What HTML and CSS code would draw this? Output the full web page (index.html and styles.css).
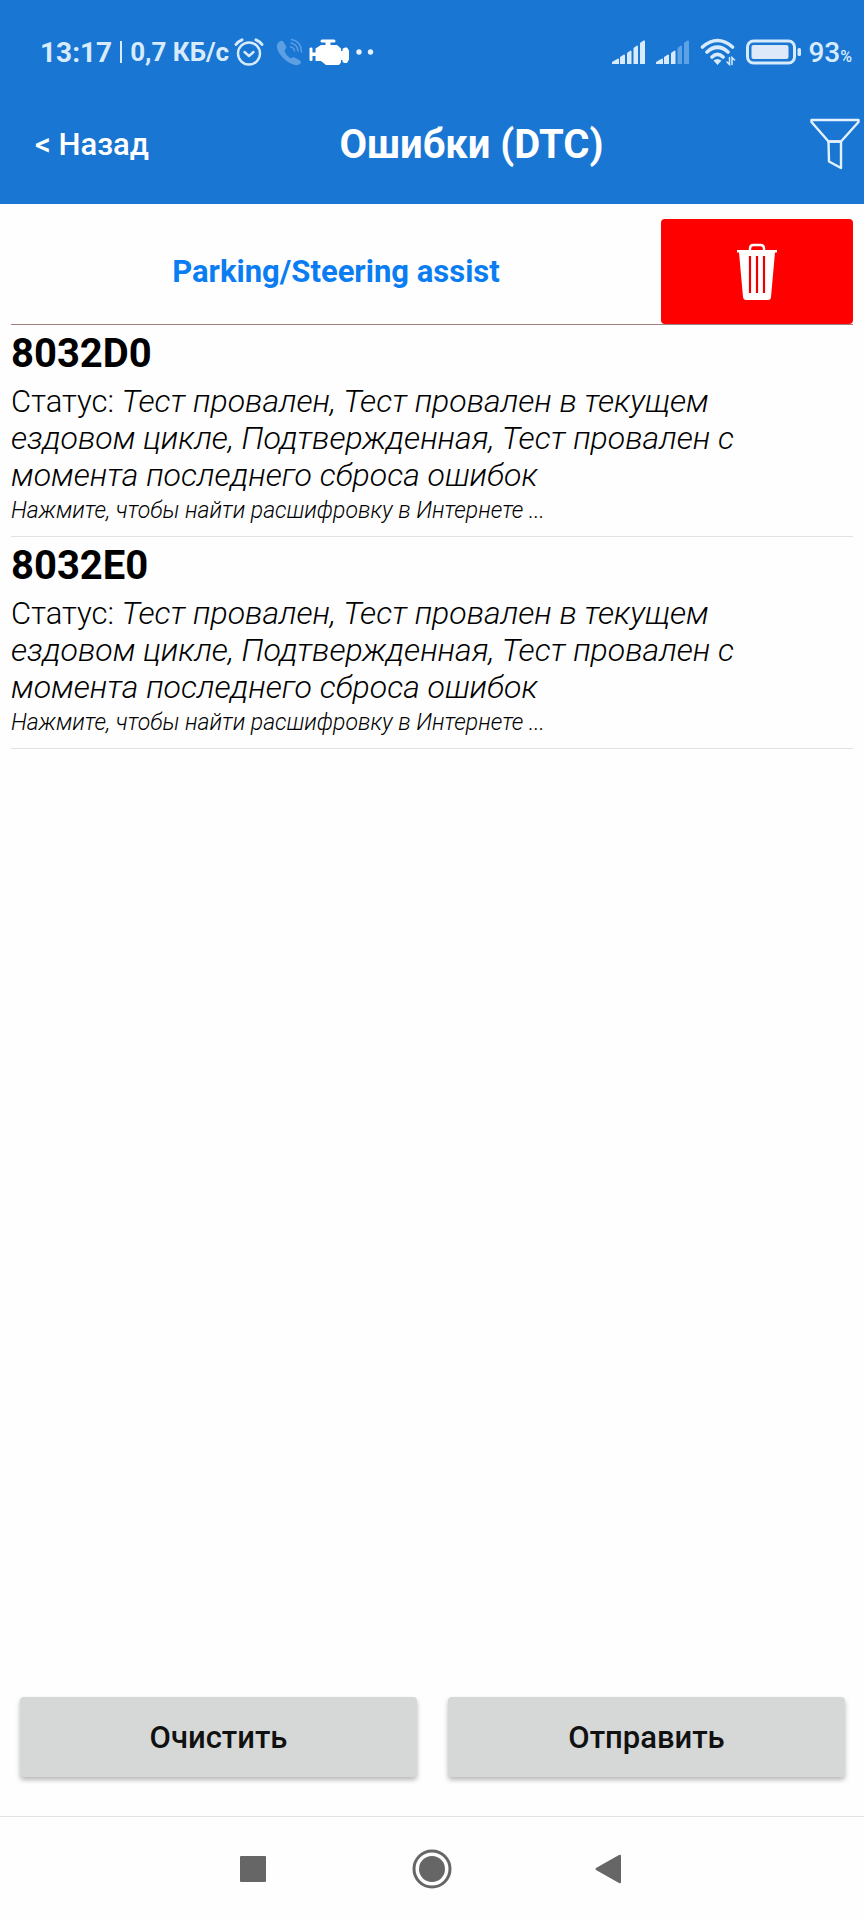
FILE: index.html
```html
<!DOCTYPE html>
<html lang="ru">

<head>
  <meta charset="utf-8">
  <meta name="viewport" content="width=device-width, initial-scale=1">
  <title>Ошибки (DTC)</title>

  <link rel="stylesheet" href="styles.css">
</head>

<body>
  <header class="header">
    <!-- Phone status bar -->
    <div class="status-bar">
      <div class="status-left">
        <span class="clock">13:17</span>
        <span class="divider"></span>
        <span class="speed">0,7 КБ/с</span>
        <svg class="icon-alarm" width="30" height="28" viewBox="0 0 30 28" fill="none" stroke="#d8ebfd" stroke-width="2.4" stroke-linecap="round" stroke-linejoin="round">
          <circle cx="15" cy="15.500" r="11" />
          <path d="M10.500 14l4.500 4 4.500-4" />
          <path d="M2 6.500Q4 3.500 8 1.800M28 6.500Q26 3.500 22 1.800" stroke-width="3" />
        </svg>
        <svg class="icon-phone" width="27" height="28" viewBox="0 0 27 28" fill="none" stroke="#5c9fe3" stroke-linecap="round">
          <path fill="#5c9fe3" stroke="none" d="M3.500 3.500Q6 2 7.500 4L10 8Q11 10 9.300 11.500L8.500 13Q10 17.500 14.500 20.200L16.800 19.500Q18 19 19.500 20L24 22.500Q26 24 24.500 25.500Q22 28 18 26.800Q10 24.500 4.500 17Q1 12 .8 8Q.8 5 3.500 3.500Z" />
          <path d="M15.500 1.500Q25 3 25.500 14M15.200 5Q21.500 6.500 22 13M14.500 9Q18 9.500 18.500 13" stroke-width="1.400" />
        </svg>
        <svg class="icon-engine" width="42" height="28" viewBox="0 0 42 28" fill="#fff">
          <path d="M14 1.500h12q1.500 0 1.500 1.500t-1.500 1.500h-3.500v2.500h6.500l4 3.500v2.500h1.500v-2q1-1.500 3-1.500h1.500l2 3v9l-2 3.500h-2.500l-2-1v-2h-1.500v2.500l-2 2.500H18l-5-4H7.500v-5H4.500v4q0 1-1.500 1T1.500 21.500v-11Q1.500 9.500 3 9.500T4.500 10.500v4h3v-4l5.500-3.500h4.500V4.500H14q-1.500 0-1.500-1.500t1.500-1.500z" />
        </svg>
        <svg class="icon-dots" width="18" height="6" viewBox="0 0 18 6" fill="#e6f2fe">
          <circle cx="3" cy="3" r="2.700" />
          <circle cx="14.500" cy="3" r="2.700" />
        </svg>
      </div>

      <div class="status-right">
        <svg width="34" height="26" viewBox="0 0 34 26" fill="#d8ebfd">
          <path d="M0 25v-2l6-3.500q1 0 1 1V25zM8 25v-7l4-2.500q1 0 1 1V25zM15 25V14l3.500-2.500q1 0 1 1V25zM21.500 25V9L25 6.500q1 0 1 1V25zM28 25V4l3.500-2.500q1.500-.5 1.500 1V25z" />
        </svg>
        <svg width="34" height="26" viewBox="0 0 34 26" fill="#d8ebfd">
          <path d="M0 25v-2l6-3.500q1 0 1 1V25zM8 25v-7l4-2.500q1 0 1 1V25zM15 25V14l3.500-2.500q1 0 1 1V25z" />
          <path fill="#5ea2e6" d="M21.500 25V9L25 6.500q1 0 1 1V25zM28 25V4l3.500-2.500q1.500-.5 1.500 1V25z" />
        </svg>
        <svg class="icon-wifi" width="36" height="28" viewBox="0 0 36 28" fill="none" stroke="#d8ebfd" stroke-width="3.600" stroke-linecap="round">
          <path d="M2.500 9Q17.500-4 32.500 9M7 14Q17.500 4.500 28 14M12 19Q17.500 13.500 23 19" />
          <path fill="#d8ebfd" stroke="none" d="M13.500 22.500Q17.500 19.500 21.500 22.500L17.500 27Z" />
          <path stroke-width="1.500" d="M29.500 19.500v7l-2.500-2.500M32 26.500v-7l2.500 2.500" />
        </svg>
        <svg class="icon-battery" width="56" height="26" viewBox="0 0 56 26">
          <rect x="1.500" y="2" width="47" height="22" rx="6" fill="none" stroke="#d8ebfd" stroke-width="3" />
          <rect x="5.500" y="6" width="37" height="14" rx="2" fill="#dde8f8" />
          <rect x="51.500" y="9" width="3.500" height="8" rx="1.500" fill="#d8ebfd" />
        </svg>
        <span class="battery-level">93<small>%</small></span>
      </div>
    </div>

    <div class="toolbar">
      <button class="back-btn" type="button">&lt; Назад</button>
      <h1>Ошибки (DTC)</h1>
      <button class="filter-btn" type="button" aria-label="Фильтр">
        <svg width="50" height="52" viewBox="0 0 50 52" fill="none" stroke="#e4f2ff" stroke-width="2.400" stroke-linejoin="round">
          <path d="M1.500 2H48.500V4L31 23.500H18.500L1.500 4Z" />
          <path d="M18.500 23.500H31V50L19 43.500Z" />
        </svg>
      </button>
    </div>
  </header>

  <main class="content">
    <div class="section-head">
      <h2>Parking/Steering assist</h2>
      <button class="delete-btn" type="button" aria-label="Удалить">
        <svg width="42" height="58" viewBox="0 0 42 58">
          <path d="M14 8V5.500Q14 2 17.500 2H24.500Q28 2 28 5.500V8" fill="none" stroke="#fff" stroke-width="2.400" />
          <path fill="#fff" d="M1 7H41V9.500H39L35 54Q34.800 57 32 57H10Q7.500 57 7 54L3 9.500H1Z" />
          <path d="M14 13V50M21 13V50M28 13V50" stroke="#e00" stroke-width="2.200" />
        </svg>
      </button>
    </div>

    <!-- Trouble codes -->
    <ul class="dtc-list">
      <li class="dtc-item">
        <h3>8032D0</h3>
        <p class="dtc-status">Статус: <em>Тест провален, Тест провален в текущем ездовом цикле, Подтвержденная, Тест провален с момента последнего сброса ошибок</em></p>
        <a class="dtc-link" href="#">Нажмите, чтобы найти расшифровку в Интернете ...</a>
      </li>
      <li class="dtc-item">
        <h3>8032E0</h3>
        <p class="dtc-status">Статус: <em>Тест провален, Тест провален в текущем ездовом цикле, Подтвержденная, Тест провален с момента последнего сброса ошибок</em></p>
        <a class="dtc-link" href="#">Нажмите, чтобы найти расшифровку в Интернете ...</a>
      </li>
    </ul>
  </main>

  <div class="actions">
    <button class="action-btn" type="button">Очистить</button>
    <button class="action-btn" type="button">Отправить</button>
  </div>

  <!-- System navigation -->
  <nav class="nav-bar">
    <button type="button" aria-label="Недавние">
      <svg width="40" height="40" viewBox="0 0 40 40" fill="#666">
        <rect x="7" y="7" width="26" height="26" rx="1" />
      </svg>
    </button>
    <button type="button" aria-label="Домой">
      <svg width="40" height="40" viewBox="0 0 40 40" fill="#666">
        <circle cx="20" cy="20" r="18" fill="none" stroke="#666" stroke-width="3" />
        <circle cx="20" cy="20" r="13" />
      </svg>
    </button>
    <button type="button" aria-label="Назад">
      <svg width="40" height="40" viewBox="0 0 40 40" fill="#666">
        <path d="M5 19L28 6Q30 5 30 7V33Q30 35 28 34L5 21Q4 20 5 19Z" />
      </svg>
    </button>
  </nav>
</body>

</html>
```
FILE: styles.css
```css
* {
  margin: 0;
  padding: 0;
  box-sizing: border-box;
}

:root {
  --primary: #1976d3;
  --link: #0a7df2;
  --danger: #ff0000;
  --status: #d8ebfd;
}

body {
  display: flex;
  flex-direction: column;
  min-height: 100vh;
  font-family: Roboto, sans-serif;
  background-color: #fefefe;
  color: #000;
}

button {
  border: none;
  background: none;
  font-family: inherit;
  cursor: pointer;
}

svg {
  display: block;
  flex-shrink: 0;
}

.header {
  background-color: var(--primary);
  color: #fff;
}

/* Status bar */
.status-bar {
  display: flex;
  justify-content: space-between;
  align-items: center;
  height: 104px;
  padding: 0 12px 0 40px;
  color: var(--status);
}

.status-left,
.status-right {
  display: flex;
  align-items: center;
}

.clock,
.speed {
  font-size: 28px;
  font-weight: 700;
  white-space: nowrap;
}

.speed {
  font-size: 26px;
}

.divider {
  width: 2px;
  height: 22px;
  margin: 0 8px;
  background-color: var(--status);
}

.icon-alarm {
  margin: 0 12px 0 5px;
}

.icon-engine {
  margin: 0 6px 0 5px;
}

.status-right {
  gap: 10px;
}

.battery-level {
  font-size: 28px;
  font-weight: 500;
}

.icon-battery {
  margin-right: -4px;
}

.battery-level small {
  font-size: 16px;
}

/* Title row */
.toolbar {
  display: flex;
  align-items: center;
  height: 80px;
  margin-bottom: 20px;
}

.back-btn {
  padding-left: 35px;
  color: #fff;
  font-size: 31px;
  font-weight: 500;
}

.toolbar h1 {
  flex: 1;
  font-size: 40px;
  font-weight: 700;
  text-align: center;
}

.filter-btn {
  padding: 0 4px 0 16px;
}

/* Content */
.content {
  flex: 1;
  padding: 15px 11px 0;
}

.section-head {
  display: flex;
  align-items: center;
  border-bottom: 1px solid #a08080;
}

.section-head h2 {
  flex: 1;
  color: var(--link);
  font-size: 31px;
  font-weight: 700;
  text-align: center;
}

.delete-btn {
  display: flex;
  align-items: center;
  justify-content: center;
  width: 192px;
  height: 105px;
  border-radius: 4px;
  background-color: var(--danger);
}

.dtc-list {
  list-style: none;
}

.dtc-item {
  padding: 5px 0 12px;
  border-bottom: 1px solid #e2e2e2;
}

.dtc-item h3 {
  font-size: 40px;
  font-weight: 700;
  line-height: 47px;
}

.dtc-status {
  max-width: 780px;
  margin: 6px 0 4px;
  font-size: 31px;
  font-weight: 300;
  line-height: 37px;
}

.dtc-status em {
  font-size: 32px;
}

.dtc-link {
  display: block;
  color: #000;
  font-size: 23px;
  font-style: italic;
  font-weight: 300;
  line-height: 26px;
  text-decoration: none;
}

/* Bottom buttons */
.actions {
  display: flex;
  gap: 31px;
  padding: 0 19px 39px 20px;
}

.action-btn {
  flex: 1;
  height: 80px;
  border-radius: 4px;
  background-color: #d6d8d7;
  box-shadow: 0 3px 5px rgba(0, 0, 0, 0.28);
  color: #111;
  font-size: 31px;
  font-weight: 500;
}

/* Navigation bar */
.nav-bar {
  display: flex;
  align-items: center;
  justify-content: center;
  gap: 139px;
  height: 104px;
  border-top: 1px solid #e2e2e2;
}
```
